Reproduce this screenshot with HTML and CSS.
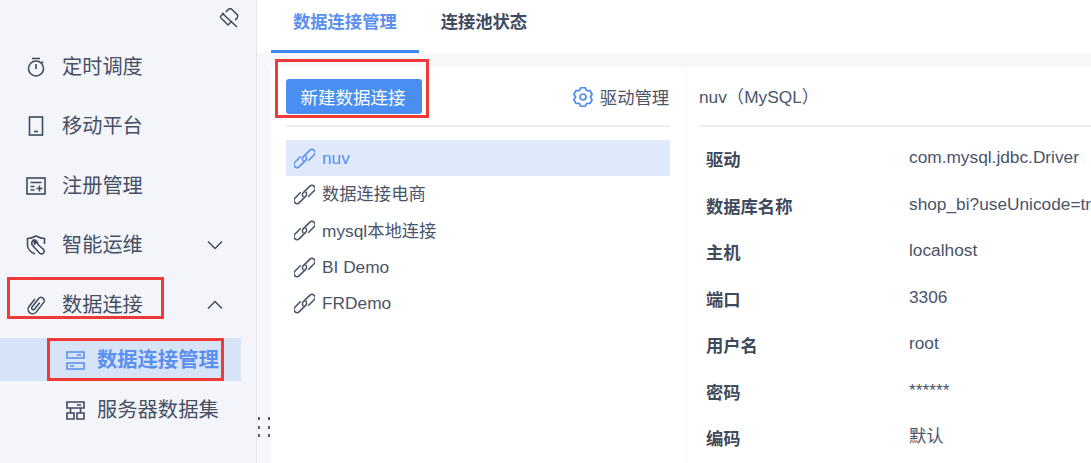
FILE: index.html
```html
<!DOCTYPE html>
<html lang="zh-CN">
<head>
  <meta charset="UTF-8">
  <title>数据连接管理</title>
  <link rel="stylesheet" href="styles.css">
</head>
<body>
  <div class="app">
    <!-- Sidebar -->
    <aside class="sidebar">
      <div class="pin-row">
        <svg class="pin" viewBox="0 0 20 20" fill="none" stroke="#3f4a60" stroke-width="1.5"><path d="M3 5 18 19M7 4c2-3 4-4 5.5-3l6 6c.5 2-.5 4-2.500 5M1 9l8 8M1 9l4-4M9 17l4-4"/></svg>
      </div>
      <div class="nav-item">
        <svg class="nav-icon" viewBox="0 0 20 20" fill="none" stroke="#3f4a60" stroke-width="1.6"><circle cx="10" cy="11.5" r="7.5"/><path d="M6 1.5h8M10 7v5M15.500 4.500l1.500 1.500"/></svg>
        <span>定时调度</span>
      </div>
      <div class="nav-item">
        <svg class="nav-icon" viewBox="0 0 20 20" fill="none" stroke="#3f4a60" stroke-width="1.6"><rect x="3.5" y="1" width="13" height="18"/><path d="M8 15.5h4"/></svg>
        <span>移动平台</span>
      </div>
      <div class="nav-item">
        <svg class="nav-icon" viewBox="0 0 20 20" fill="none" stroke="#3f4a60" stroke-width="1.6"><rect x="1" y="2" width="18" height="16"/><path d="M4.500 6.500h11M4.500 10.500h4M4.500 14h4M10.500 12.500h6M13.500 9.500v6"/></svg>
        <span>注册管理</span>
      </div>
      <div class="nav-item">
        <svg class="nav-icon" viewBox="0 0 20 20" fill="none" stroke="#3f4a60" stroke-width="1.6"><path d="M9 19C5 17.500 1.500 14 1.500 10V3.500C4 3.500 7 2.500 10 1c3 1.500 6 2.500 8.500 2.500V9"/><path d="M8 5a3.500 3.500 0 0 0-1 6l6.500 7a2.200 2.200 0 0 0 4-3.500L11.500 9A3.500 3.500 0 0 0 8 5l2 2.500-1.500 1.500z"/></svg>
        <span>智能运维</span>
        <svg class="chevron" viewBox="0 0 16 10" fill="none" stroke="#3f4a60" stroke-width="1.5"><path d="M1 1.5l7 7 7-7"/></svg>
      </div>
      <div class="nav-item">
        <svg class="nav-icon" viewBox="0 0 20 20" fill="none" stroke="#3f4a60" stroke-width="1.5"><path transform="rotate(38 10 10)" d="M5.500 6v9.500a4.500 4.500 0 0 0 9 0V3.500a3.200 3.200 0 0 0-6.400 0V14a1.700 1.700 0 0 0 3.400 0V6"/></svg>
        <span>数据连接</span>
        <svg class="chevron" viewBox="0 0 16 10" fill="none" stroke="#3f4a60" stroke-width="1.5"><path d="M1 8.5l7-7 7 7"/></svg>
      </div>
      <div class="sub-item active">
        <svg class="sub-icon" viewBox="0 0 19 20" fill="none" stroke="#5a8ff0" stroke-width="1.6"><path d="M1 2h17v6H1zM1 13h17v6H1zM11 5h4M4 16h4"/></svg>
        <span>数据连接管理</span>
      </div>
      <div class="sub-item">
        <svg class="sub-icon" viewBox="0 0 19 20" fill="none" stroke="#3f4a60" stroke-width="1.6"><path d="M1 2h17v6H1zM11 5h4M1 13h7v6H1zM11 13h7v6h-7zM4.500 8v5M14.500 8v5"/></svg>
        <span>服务器数据集</span>
      </div>
      <div class="nav-item nav-last">
        <span class="nav-spacer"></span>
        <span>安全管理</span>
      </div>
    </aside>

    <!-- Main -->
    <main class="main">
      <div class="tabs">
        <div class="tab active">数据连接管理</div>
        <div class="tab">连接池状态</div>
      </div>
      <div class="panels">
        <section class="conn-panel">
          <div class="conn-head">
            <button class="btn-new">新建数据连接</button>
            <div class="driver">
              <svg class="driver-icon" viewBox="0 0 20 20" fill="none" stroke="#4d8df0" stroke-width="1.7" stroke-linejoin="round"><path d="M7.860.75h4.280L13.700 3.590l3.250-.07 2.130 3.700L17.400 10l1.680 2.780-2.130 3.700-3.250-.07-1.560 2.840H7.860L6.300 16.410l-3.250.07-2.130-3.700L2.600 10 .92 7.220l2.130-3.700 3.250.07z"/><circle cx="10" cy="10" r="3"/></svg>
              <span>驱动管理</span>
            </div>
          </div>
          <ul class="conn-list">
            <li class="conn active"><svg class="link"><use href="#link"/></svg>nuv</li>
            <li class="conn"><svg class="link"><use href="#link"/></svg>数据连接电商</li>
            <li class="conn"><svg class="link"><use href="#link"/></svg>mysql本地连接</li>
            <li class="conn"><svg class="link"><use href="#link"/></svg>BI Demo</li>
            <li class="conn"><svg class="link"><use href="#link"/></svg>FRDemo</li>
          </ul>
        </section>
        <section class="detail">
          <div class="detail-title">nuv（MySQL）</div>
          <dl class="props">
            <dt>驱动</dt><dd>com.mysql.jdbc.Driver</dd>
            <dt>数据库名称</dt><dd>shop_bi?useUnicode=true</dd>
            <dt>主机</dt><dd>localhost</dd>
            <dt>端口</dt><dd>3306</dd>
            <dt>用户名</dt><dd>root</dd>
            <dt>密码</dt><dd>******</dd>
            <dt>编码</dt><dd>默认</dd>
          </dl>
        </section>
      </div>
    </main>

    <!-- Drag handle -->
    <div class="grip"><i></i><i></i><i></i><i></i><i></i><i></i></div>

    <!-- Red annotation boxes -->
    <div class="mark mark-nav"></div>
    <div class="mark mark-sub"></div>
    <div class="mark mark-btn"></div>
  </div>

  <svg width="0" height="0" class="defs">
    <symbol id="link" viewBox="0 0 20 20">
      <g fill="none" stroke="currentColor" stroke-width="1.5" transform="rotate(-45 10 10)">
        <path d="M9 6H1a3 3 0 0 0 0 6h8.500a3 3 0 0 0 3-3"/>
        <path d="M11 14h8a3 3 0 0 0 0-6h-8.500a3 3 0 0 0-3 3"/>
      </g>
    </symbol>
  </svg>
</body>
</html>
```

FILE: styles.css
```css
* {
  margin: 0;
  padding: 0;
  box-sizing: border-box;
}

html, body {
  height: 100%;
  overflow: hidden;
}

body {
  font-family: "Liberation Sans", "Noto Sans CJK SC", sans-serif;
  color: #4a5468;
  background: #fff;
}

.app {
  position: relative;
  display: flex;
  height: 463px;
  overflow: hidden;
}

/* Sidebar */
.sidebar {
  width: 257px;
  flex: none;
  background: #f3f5fa;
  border-right: 1px solid #e4e6eb;
}

.pin-row {
  height: 36px;
  display: flex;
  justify-content: flex-end;
  padding: 8px 17px 0 0;
}

.pin {
  width: 20px;
  height: 20px;
}

.nav-item {
  height: 59.5px;
  display: flex;
  align-items: center;
  padding: 2px 33px 0 26px;
  font-size: 20.2px;
  line-height: 24px;
  color: #464f63;
}

.nav-last {
  margin-top: 16px;
}

.nav-icon {
  width: 20px;
  height: 20px;
  margin-right: 16px;
  flex: none;
}

.nav-spacer {
  width: 36px;
}

.chevron {
  width: 16px;
  height: 10px;
  margin-left: auto;
}

.sub-item {
  width: 241px;
  height: 43px;
  display: flex;
  align-items: center;
  padding: 2px 0 0 66px;
  font-size: 20.3px;
  line-height: 24px;
  color: #464f63;
}

.sub-item.active {
  background: #d7e3f7;
  color: #5a8ff0;
  font-weight: bold;
  margin-top: 4px;
  margin-bottom: 7px;
}

.sub-icon {
  width: 19px;
  height: 20px;
  margin-right: 12px;
}

/* Main */
.main {
  flex: 1;
  min-width: 0;
}

.tabs {
  height: 53px;
  display: flex;
  padding-left: 14px;
}

.tab {
  padding: 0 22px;
  height: 53px;
  line-height: 45px;
  font-size: 17.3px;
  font-weight: bold;
  color: #3f4a5c;
}

.tab.active {
  color: #5a8ff0;
  border-bottom: 3px solid #3f87f0;
}

.panels {
  display: flex;
  height: 410px;
  background: #f6f7f9;
  padding: 14px 0 0 14px;
}

.conn-panel {
  width: 414px;
  flex: none;
  background: #fff;
  padding: 0 15px;
}

.conn-head {
  height: 60px;
  display: flex;
  align-items: center;
  justify-content: space-between;
  border-bottom: 2px solid #eceef1;
  padding-top: 1px;
}

.btn-new {
  width: 136px;
  height: 35px;
  background: #4a8ef2;
  color: #fff;
  border: 0;
  border-radius: 3px;
  padding-right: 2px;
  font-family: inherit;
  font-size: 17.5px;
}

.driver {
  display: flex;
  align-items: center;
  font-size: 17.3px;
  color: #4a5468;
  margin-right: 1px;
}

.driver-icon {
  width: 20px;
  height: 20px;
  margin-right: 7px;
}

.conn-list {
  list-style: none;
  margin-top: 13px;
}

.conn {
  height: 36.3px;
  display: flex;
  align-items: center;
  padding-left: 8px;
  font-size: 17.3px;
  line-height: 20px;
  color: #4a5468;
}

.conn.active {
  background: #dfe9fb;
  color: #5a8ff0;
}

.link {
  width: 21px;
  height: 21px;
  margin-right: 7px;
}

.defs {
  position: absolute;
}

.detail {
  flex: 1;
  min-width: 0;
  margin-left: 1px;
  background: #fff;
  padding-left: 13px;
  overflow: hidden;
}

.detail-title {
  height: 60px;
  line-height: 60px;
  font-size: 17.3px;
  border-bottom: 2px solid #eceef1;
  white-space: nowrap;
}

.props {
  display: grid;
  grid-template-columns: 203px 1fr;
  grid-auto-rows: 46.5px;
  padding: 7px 0 0 7px;
  font-size: 17.3px;
  line-height: 20px;
}

.props dt {
  font-weight: bold;
  color: #3f4a5c;
  padding-top: 16px;
}

.props dd {
  color: #4a5468;
  white-space: nowrap;
  padding-top: 13px;
}

/* Drag handle */
.grip {
  position: absolute;
  left: 258px;
  top: 417px;
  display: grid;
  grid-template-columns: 2px 2px;
  gap: 5.5px 8px;
}

.grip i {
  width: 2px;
  height: 3px;
  background: #555d6b;
}

/* Annotations */
.mark {
  position: absolute;
  border: 3px solid #f03a3a;
}

.mark-nav {
  left: 7px;
  top: 277px;
  width: 157px;
  height: 42px;
}

.mark-sub {
  left: 47px;
  top: 338px;
  width: 177px;
  height: 43px;
}

.mark-btn {
  left: 275px;
  top: 59px;
  width: 154px;
  height: 59px;
}
```
